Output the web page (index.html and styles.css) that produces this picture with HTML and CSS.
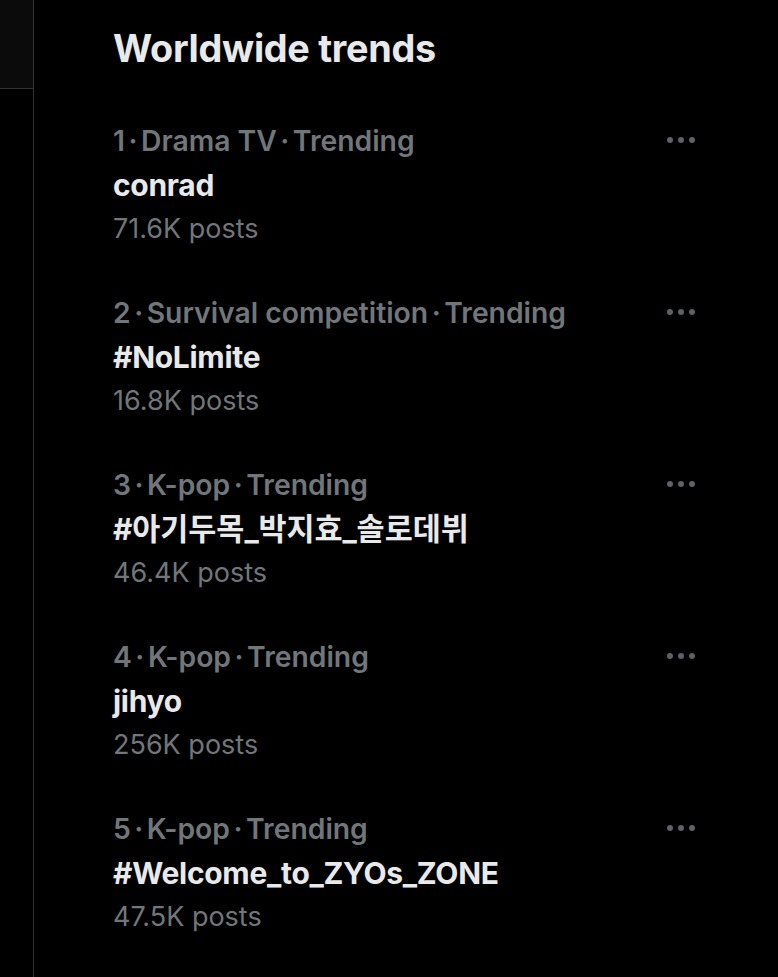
FILE: index.html
```html
<!DOCTYPE html>
<html>
<head>
<meta charset="utf-8">
<link rel="stylesheet" href="styles.css">
</head>
<body>
<div class="page">
  <aside class="side">
    <div class="side-top"></div>
  </aside>
  <main class="main">
    <h1 class="title">Worldwide trends</h1>
    <section class="trend">
      <div class="trend-text">
        <div class="meta">1<span class="sep">·</span>Drama TV<span class="sep">·</span>Trending</div>
        <div class="name">conrad</div>
        <div class="posts">71.6K posts</div>
      </div>
      <div class="more"><span></span><span></span><span></span></div>
    </section>
    <section class="trend">
      <div class="trend-text">
        <div class="meta">2<span class="sep">·</span>Survival competition<span class="sep">·</span>Trending</div>
        <div class="name">#NoLimite</div>
        <div class="posts">16.8K posts</div>
      </div>
      <div class="more"><span></span><span></span><span></span></div>
    </section>
    <section class="trend">
      <div class="trend-text">
        <div class="meta">3<span class="sep">·</span>K-pop<span class="sep">·</span>Trending</div>
        <div class="name">#<span class="ko">아기두목</span>_<span class="ko">박지효</span>_<span class="ko">솔로데뷔</span></div>
        <div class="posts">46.4K posts</div>
      </div>
      <div class="more"><span></span><span></span><span></span></div>
    </section>
    <section class="trend">
      <div class="trend-text">
        <div class="meta">4<span class="sep">·</span>K-pop<span class="sep">·</span>Trending</div>
        <div class="name">jihyo</div>
        <div class="posts">256K posts</div>
      </div>
      <div class="more"><span></span><span></span><span></span></div>
    </section>
    <section class="trend">
      <div class="trend-text">
        <div class="meta">5<span class="sep">·</span>K-pop<span class="sep">·</span>Trending</div>
        <div class="name">#Welcome_to_ZYOs_ZONE</div>
        <div class="posts">47.5K posts</div>
      </div>
      <div class="more"><span></span><span></span><span></span></div>
    </section>
  </main>
</div>
</body>
</html>
```
FILE: styles.css
```css
html, body {
  margin: 0;
  padding: 0;
  background: #000;
}
body {
  font-family: Inter, "Noto Sans CJK KR", sans-serif;
  color: #e7e9ea;
}
.page {
  display: flex;
  min-height: 977px;
}
.side {
  width: 33px;
  flex: none;
  border-right: 1px solid #2f3336;
}
.side-top {
  height: 88px;
  background: #0b0b0b;
  border-bottom: 1px solid #2f3336;
}
.main {
  flex: 1;
  padding-left: 79px;
  padding-right: 83px;
}
.title {
  margin: 0;
  padding-top: 26px;
  font-size: 37.8px;
  line-height: 44px;
  font-weight: 700;
  color: #e7e9ea;
  letter-spacing: -0.3px;
}
.trend {
  display: flex;
  justify-content: space-between;
  align-items: flex-start;
  margin-top: 49px;
}
.trend + .trend {
  margin-top: 40px;
}
.meta, .posts {
  font-size: 27px;
  line-height: 44px;
  color: #71767b;
}
.meta {
  font-weight: 600;
  font-size: 28.3px;
}
.sep {
  margin: 0 3.5px;
}
.name {
  font-size: 30px;
  line-height: 44px;
  font-weight: 700;
  color: #e7e9ea;
  letter-spacing: -0.3px;
}
.ko {
  font-size: 30.5px;
  letter-spacing: 0;
}
.more {
  display: flex;
  gap: 5px;
  padding-top: 18px;
}
.more span {
  width: 6px;
  height: 6px;
  border-radius: 50%;
  background: #5e6266;
}
```
